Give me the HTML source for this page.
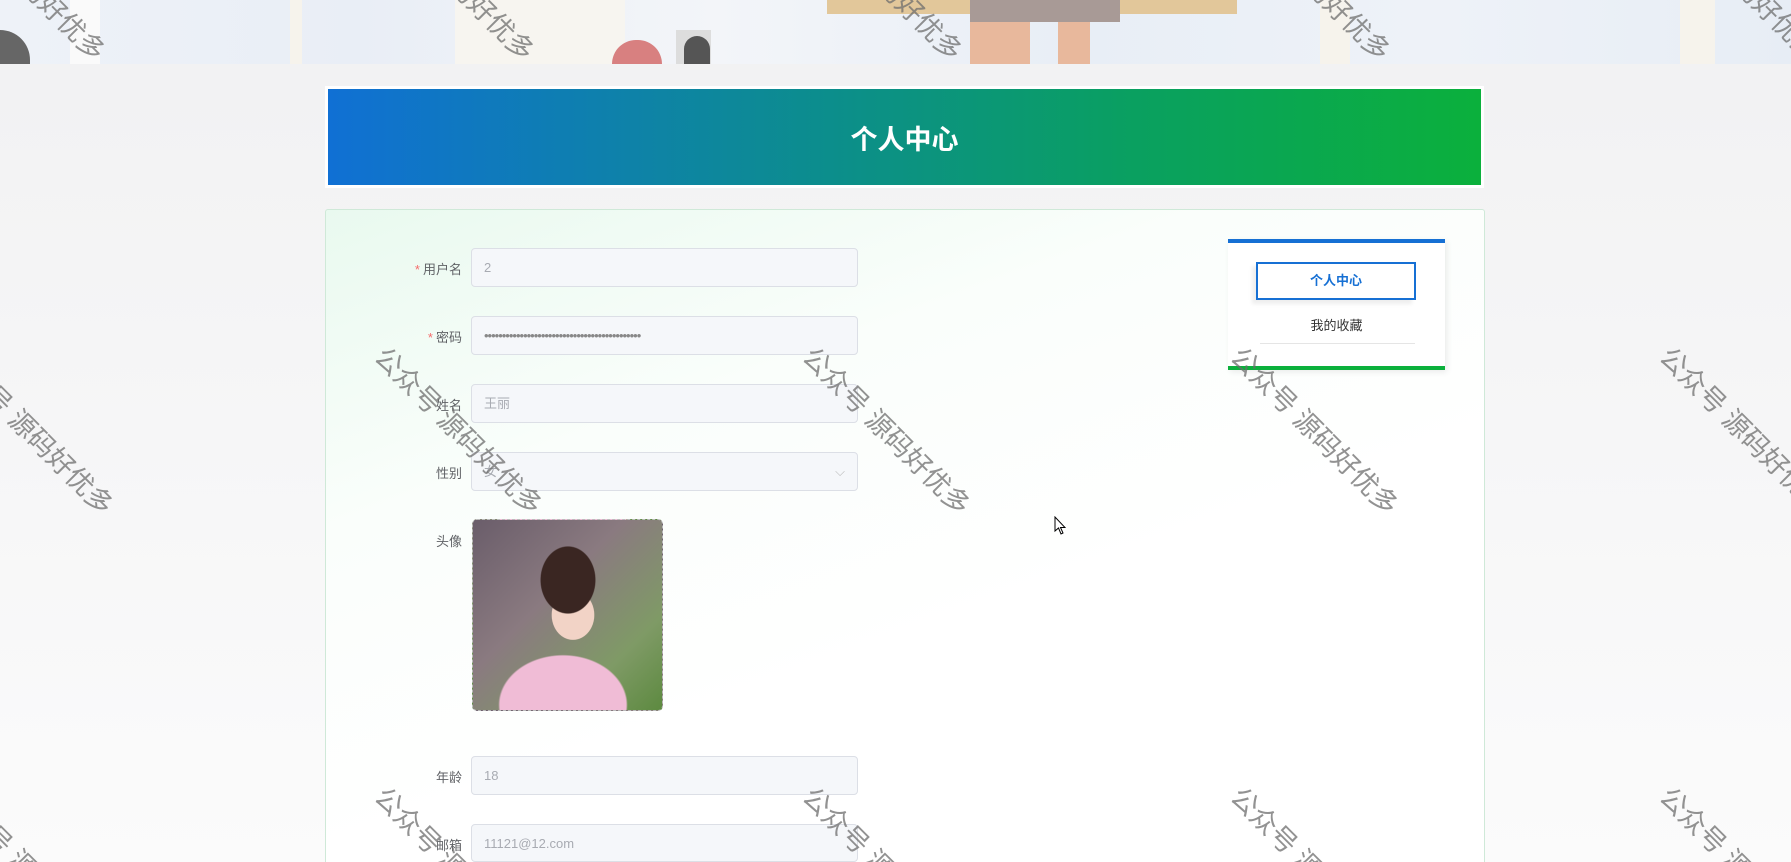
<!DOCTYPE html>
<html><head><meta charset="utf-8"><style>
*{margin:0;padding:0;box-sizing:border-box}
html{width:1791px;height:862px;overflow:hidden}
body{width:1791px;height:862px;overflow:hidden;position:relative;font-family:"Liberation Sans","Noto Sans CJK SC",sans-serif;background:linear-gradient(180deg,#f1f1f2 0%,#f6f6f7 50%,#fbfbfb 100%)}
.clip{position:absolute;left:0;top:0;width:1791px;height:862px;overflow:hidden}
.banner{position:absolute;left:0;top:0;width:1791px;height:64px;background:linear-gradient(90deg,#eef2f8,#e9eef6 20%,#f3f5f9 40%,#e8eef6 60%,#eef2f8 80%,#e7edf5)}
.b1{position:absolute;top:0;height:64px}
.hdr{position:absolute;left:325px;top:86px;width:1159px;height:102px;background:#fff;padding:3px}
.hdr div{width:100%;height:100%;background:linear-gradient(90deg,#1070d4,#0aa060 70%,#0bb03c);color:#fff;font-size:27px;font-weight:bold;display:flex;align-items:center;justify-content:center}
.panel{position:absolute;left:325px;top:209px;width:1160px;height:653px;border:1px solid #cfe9d8;border-bottom:none;border-radius:3px 3px 0 0;background:linear-gradient(160deg,#e9f9ef 0%,#fafefb 30%,#fff 60%,#fff 100%)}
.lbl{position:absolute;width:100px;text-align:right;left:362px;font-size:13px;color:#606266}
.lbl i{color:#f56c6c;font-style:normal;margin-right:3px}
.inp{position:absolute;left:471px;width:387px;height:39px;border:1px solid #dcdfe6;border-radius:4px;background:#f5f7fa;color:#a8abb2;font-size:13px;padding-left:12px;line-height:37px;overflow:hidden}
.wm{position:absolute;font-size:27px;color:rgba(110,110,110,.75);transform:rotate(45deg);white-space:nowrap;transform-origin:center;width:240px;text-align:center}
.side{position:absolute;left:1228px;top:239px;width:217px;height:131px;background:#fff;border-top:4px solid #1670d4;border-bottom:4px solid #0bb03c;box-shadow:2px 2px 6px rgba(0,0,0,.08)}
.btn{position:absolute;left:28px;top:19px;width:160px;height:38px;border:2px solid #1670d4;color:#1670d4;font-size:13px;font-weight:bold;text-align:center;line-height:34px;box-shadow:-4px 4px 4px #eee}
.fav{position:absolute;left:0;width:100%;top:72px;text-align:center;font-size:13px;color:#333}
.line{position:absolute;left:32px;right:30px;top:100px;border-top:1px solid #e5e5e5}
.av{position:absolute;left:472px;top:519px;width:191px;height:192px;border:1px dashed #bbb;border-radius:5px;overflow:hidden;background:radial-gradient(ellipse 45px 55px at 95px 60px,#3a2622 60%,transparent 62%),radial-gradient(ellipse 30px 35px at 100px 95px,#f2d3c6 70%,transparent 72%),radial-gradient(ellipse 90px 70px at 90px 185px,#f0bcd6 70%,transparent 72%),linear-gradient(135deg,#6a5d6a 0%,#8a7a80 40%,#7f9a66 75%,#5d8a40 100%)}
</style></head><body><div class="clip">
<div class="banner">
<div class="b1" style="left:70px;width:30px;background:#fafafa"></div>
<div class="b1" style="left:290px;width:12px;background:#f6f3ec"></div>
<div class="b1" style="left:455px;width:170px;background:#f7f5f0"></div>
<div style="position:absolute;left:612px;top:40px;width:50px;height:24px;border-radius:25px 25px 0 0;background:#d88080"></div>
<div style="position:absolute;left:0;top:30px;width:30px;height:34px;border-radius:0 30px 0 0;background:#666"></div>
<div style="position:absolute;left:676px;top:30px;width:35px;height:34px;background:#ddd"><div style="margin:6px 0 0 8px;width:26px;height:28px;border-radius:13px 13px 0 0;background:#555"></div></div>
<div class="b1" style="left:827px;width:410px;height:14px;background:#e2c79a"></div>
<div class="b1" style="left:960px;width:140px;height:64px;background:linear-gradient(90deg,transparent 0,transparent 10px,#e8b89c 10px,#e8b89c 70px,transparent 70px,transparent 98px,#e8b89c 98px,#e8b89c 130px,transparent 130px)"></div>
<div class="b1" style="left:970px;width:150px;height:22px;background:#a89a96"></div>
<div class="b1" style="left:1320px;width:30px;background:#f6f3ec"></div>
<div class="b1" style="left:1680px;width:35px;background:#f6f3ec"></div>
</div>
<div class="hdr"><div>个人中心</div></div>
<div class="panel"></div>

<div class="lbl" style="top:259px"><i>*</i>用户名</div>
<div class="inp" style="top:248px">2</div>
<div class="lbl" style="top:327px"><i>*</i>密码</div>
<div class="inp" style="top:316px;color:#888;letter-spacing:-1px">••••••••••••••••••••••••••••••••••••••••••••</div>
<div class="lbl" style="top:395px">姓名</div>
<div class="inp" style="top:384px">王丽</div>
<div class="lbl" style="top:463px">性别</div>
<div class="inp" style="top:452px">女<span style="position:absolute;right:12px;top:0;color:#bbb">⌵</span></div>
<div class="lbl" style="top:531px">头像</div>
<div class="av"></div>
<div class="lbl" style="top:767px">年龄</div>
<div class="inp" style="top:756px">18</div>
<div class="lbl" style="top:835px">邮箱</div>
<div class="inp" style="top:824px;height:38px">11121@12.com</div>

<div class="side"><div class="btn">个人中心</div><div class="fav">我的收藏</div><div class="line"></div></div>

<div class="wm" style="left:-97px;top:-44px">公众号 源码好优多</div>
<div class="wm" style="left:332px;top:-44px">公众号 源码好优多</div>
<div class="wm" style="left:760px;top:-44px">公众号 源码好优多</div>
<div class="wm" style="left:1188px;top:-44px">公众号 源码好优多</div>
<div class="wm" style="left:1617px;top:-44px">公众号 源码好优多</div>
<div class="wm" style="left:-89px;top:410px">公众号 源码好优多</div>
<div class="wm" style="left:340px;top:410px">公众号 源码好优多</div>
<div class="wm" style="left:768px;top:410px">公众号 源码好优多</div>
<div class="wm" style="left:1196px;top:410px">公众号 源码好优多</div>
<div class="wm" style="left:1625px;top:410px">公众号 源码好优多</div>
<div class="wm" style="left:-89px;top:850px">公众号 源码好优多</div>
<div class="wm" style="left:340px;top:850px">公众号 源码好优多</div>
<div class="wm" style="left:768px;top:850px">公众号 源码好优多</div>
<div class="wm" style="left:1196px;top:850px">公众号 源码好优多</div>
<div class="wm" style="left:1625px;top:850px">公众号 源码好优多</div>
<svg style="position:absolute;left:1054px;top:516px" width="12" height="19" viewBox="0 0 12 19"><path d="M1 1 L1 15 L4.5 12 L7 18 L9 17 L6.5 11.5 L11 11.5 Z" fill="#fff" stroke="#000" stroke-width="1"/></svg>
</div></body></html>
